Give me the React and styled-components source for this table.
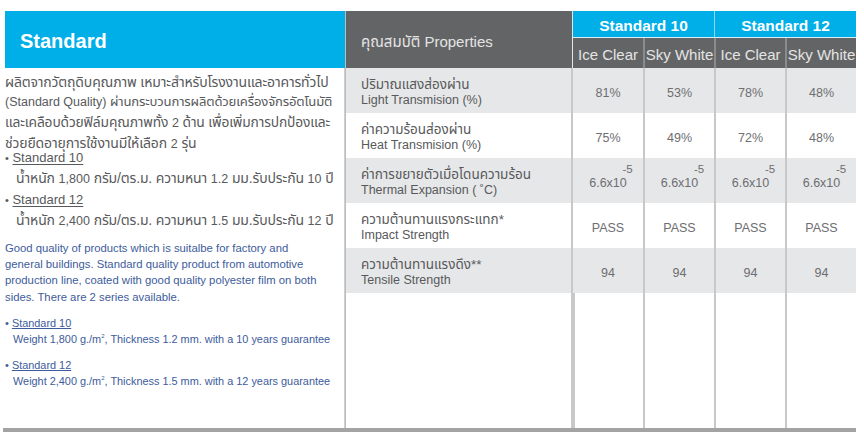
import React from "react";
import styled, { createGlobalStyle } from "styled-components";

const GlobalStyle = createGlobalStyle`
  html, body {
    margin: 0;
    padding: 0;
    background: #ffffff;
  }
  body {
    font-family: "Liberation Sans", "Noto Sans Thai", "Noto Sans", sans-serif;
  }
`;

const rows = [
  { th: "ปริมาณแสงส่องผ่าน", en: "Light Transmision (%)", values: ["81%", "53%", "78%", "48%"] },
  { th: "ค่าความร้อนส่องผ่าน", en: "Heat Transmision (%)", values: ["75%", "49%", "72%", "48%"] },
  { th: "ค่าการขยายตัวเมื่อโดนความร้อน", en: "Thermal Expansion ( ˚C)", values: ["exp", "exp", "exp", "exp"] },
  { th: "ความต้านทานแรงกระแทก*", en: "Impact Strength", values: ["PASS", "PASS", "PASS", "PASS"] },
  { th: "ความต้านทานแรงดึง**", en: "Tensile Strength", values: ["94", "94", "94", "94"] },
];

function App() {
  return (
    <>
      <GlobalStyle />
      <Page>
        <Wrap>
          <LeftPanel>
            <LeftHeader>Standard</LeftHeader>
            <LeftBody>
              <ThaiBlock>
                <Line $h={20.3}>ผลิตจากวัตถุดิบคุณภาพ เหมาะสำหรับโรงงานและอาคารทั่วไป</Line>
                <Line $h={20.3} $fs={13.1}>
                  <Lat>(Standard Quality)</Lat> ผ่านกระบวนการผลิตด้วยเครื่องจักรอัตโนมัติ
                </Line>
                <Line $h={20.3} $fs={13.8}>
                  และเคลือบด้วยฟิล์มคุณภาพทั้ง <Lat>2</Lat> ด้าน เพื่อเพิ่มการปกป้องและ
                </Line>
                <Line $h={20.3}>
                  ช่วยยืดอายุการใช้งานมีให้เลือก <Lat>2</Lat> รุ่น
                </Line>
              </ThaiBlock>

              <ThaiList>
                <li>
                  <Line $h={21}>
                    <Bullet>•</Bullet> <u>Standard 10</u>
                  </Line>
                  <Line $h={21} $indent={11}>
                    น้ำหนัก <Lat>1,800</Lat> กรัม/ตร.ม. ความหนา <Lat>1.2</Lat> มม.รับประกัน <Lat>10</Lat> ปี
                  </Line>
                </li>
                <li>
                  <Line $h={21}>
                    <Bullet>•</Bullet> <u>Standard 12</u>
                  </Line>
                  <Line $h={21} $indent={11}>
                    น้ำหนัก <Lat>2,400</Lat> กรัม/ตร.ม. ความหนา <Lat>1.5</Lat> มม.รับประกัน <Lat>12</Lat> ปี
                  </Line>
                </li>
              </ThaiList>

              <EnBlock>
                <Line $h={16.3}>Good quality of products which is suitalbe for factory and</Line>
                <Line $h={16.3}>general buildings. Standard quality product from automotive</Line>
                <Line $h={16.3}>production line, coated with good quality polyester film on both</Line>
                <Line $h={16.3}>sides. There are 2 series available.</Line>
              </EnBlock>

              <EnList>
                <li>
                  <Line $h={16}>
                    <Bullet>•</Bullet> <u>Standard 10</u>
                  </Line>
                  <Line $h={16} $indent={8}>
                    Weight 1,800 g./m<sup>2</sup>, Thickness 1.2 mm. with a 10 years guarantee
                  </Line>
                </li>
                <li>
                  <Line $h={16}>
                    <Bullet>•</Bullet> <u>Standard 12</u>
                  </Line>
                  <Line $h={16} $indent={8}>
                    Weight 2,400 g./m<sup>2</sup>, Thickness 1.5 mm. with a 12 years guarantee
                  </Line>
                </li>
              </EnList>
            </LeftBody>
          </LeftPanel>

          <Table>
            <PropHead>คุณสมบัติ Properties</PropHead>
            <SeriesHead>Standard 10</SeriesHead>
            <SeriesHead $divider>Standard 12</SeriesHead>
            <SubHead>Ice Clear</SubHead>
            <SubHead>Sky White</SubHead>
            <SubHead>Ice Clear</SubHead>
            <SubHead>Sky White</SubHead>

            {rows.map((r, i) => (
              <React.Fragment key={r.en}>
                <PropCell $shade={i % 2 === 0}>
                  <PropTh>{r.th}</PropTh>
                  <PropEn>{r.en}</PropEn>
                </PropCell>
                {r.values.map((v, j) => (
                  <ValueCell key={j} $shade={i % 2 === 0}>
                    {v === "exp" ? (
                      <Exp>
                        6.6x10<ExpSup>-5</ExpSup>
                      </Exp>
                    ) : (
                      v
                    )}
                  </ValueCell>
                ))}
              </React.Fragment>
            ))}

            <FillCell $first />
            <FillCell />
            <FillCell />
            <FillCell />
            <FillCell />
          </Table>
        </Wrap>
        <BottomBar />
      </Page>
    </>
  );
}

const Page = styled.div`
  width: 864px;
  height: 441px;
  padding-top: 11px;
  box-sizing: border-box;
  overflow: hidden;
`;

const Wrap = styled.div`
  display: flex;
  padding-left: 5px;
`;

const LeftPanel = styled.div`
  width: 340px;
  display: flex;
  flex-direction: column;
`;

const LeftHeader = styled.div`
  height: 57px;
  background: #00aee8;
  color: #ffffff;
  font-size: 20px;
  font-weight: 700;
  display: flex;
  align-items: center;
  padding-left: 15px;
  padding-top: 4px;
  box-sizing: border-box;
`;

const LeftBody = styled.div`
  height: 360px;
  border-right: 1px solid #cfcfcf;
  padding-top: 4px;
  box-sizing: border-box;
  color: #58595b;
  white-space: nowrap;
  overflow: hidden;
`;

const Line = styled.div`
  height: ${(p) => p.$h}px;
  line-height: ${(p) => p.$h}px;
  padding-left: ${(p) => p.$indent || 0}px;
  letter-spacing: -0.15px;
  ${(p) => (p.$fs ? `font-size: ${p.$fs}px;` : "")}
  overflow: visible;
`;

const Lat = styled.span`
  font-size: 12.5px;
  letter-spacing: 0;
`;

const ThaiBlock = styled.div`
  font-size: 14px;
`;

const ThaiList = styled.ul`
  list-style: none;
  margin: -6.7px 0 0;
  padding: 0;
  font-size: 14px;

  u {
    font-size: 13px;
    letter-spacing: 0;
    text-underline-offset: 2px;
  }
`;

const Bullet = styled.span`
  font-size: 11px;
`;

const EnBlock = styled.div`
  margin-top: 9.3px;
  font-size: 11.3px;
  color: #3d5c9c;
  ${Line} {
    letter-spacing: 0;
  }
`;

const EnList = styled.ul`
  list-style: none;
  margin: 10px 0 0;
  padding: 0;
  font-size: 10.9px;
  color: #3d5c9c;

  li {
    margin-bottom: 10px;
  }
  ${Line} {
    letter-spacing: 0;
  }
  sup {
    font-size: 6px;
    line-height: 0;
  }
`;

const Table = styled.div`
  display: grid;
  grid-template-columns: 227px 70px 71px 71px 71px;
  grid-template-rows: 27px 30px repeat(5, 45px) 135px;
  border-left: 1px solid #bdbdbd;
`;

const PropHead = styled.div`
  grid-row: 1 / 3;
  background: #636466;
  color: #e4e4e4;
  font-size: 15px;
  display: flex;
  align-items: center;
  padding-left: 15px;
  padding-top: 5px;
  border-right: 1px solid #e6e6e6;
`;

const SeriesHead = styled.div`
  grid-column: span 2;
  background: #00aee8;
  color: #ffffff;
  font-size: 15.5px;
  font-weight: 700;
  display: flex;
  align-items: center;
  justify-content: center;
  padding-top: 3px;
  border-left: ${(p) => (p.$divider ? "1px solid #8fd6f2" : "none")};
  border-bottom: 1px solid #d8eef7;
`;

const SubHead = styled.div`
  background: #636466;
  color: #e4e4e4;
  font-size: 15px;
  display: flex;
  align-items: center;
  justify-content: center;
  padding-top: 3px;
  white-space: nowrap;
  & + & {
    border-left: 2px solid #8b8b8d;
  }
`;

const PropCell = styled.div`
  background: ${(p) => (p.$shade ? "#e6e7e8" : "#ffffff")};
  display: flex;
  flex-direction: column;
  justify-content: center;
  padding-left: 15px;
  padding-top: 3px;
  color: #58595b;
  border-right: 2px solid #c8c8c8;
  white-space: nowrap;
`;

const PropTh = styled.div`
  font-size: 13.5px;
  height: 16px;
  line-height: 16px;
`;

const PropEn = styled.div`
  font-size: 12.5px;
  height: 15px;
  line-height: 15px;
`;

const ValueCell = styled.div`
  background: ${(p) => (p.$shade ? "#e6e7e8" : "#ffffff")};
  display: flex;
  align-items: center;
  justify-content: center;
  padding-top: 4px;
  color: #6d6e71;
  font-size: 12.5px;
  & + & {
    border-left: 2px solid #c8c8c8;
  }
`;

const Exp = styled.span`
  position: relative;
`;

const ExpSup = styled.span`
  position: absolute;
  right: -6px;
  top: -13px;
  font-size: 11.5px;
`;

const FillCell = styled.div`
  border-right: ${(p) => (p.$first ? "2px solid #c8c8c8" : "none")};
  & + & {
    border-left: 2px solid #c8c8c8;
  }
`;

const BottomBar = styled.div`
  margin-left: 3px;
  width: 853px;
  height: 4px;
  background: #a3a3a3;
`;

export default App;
